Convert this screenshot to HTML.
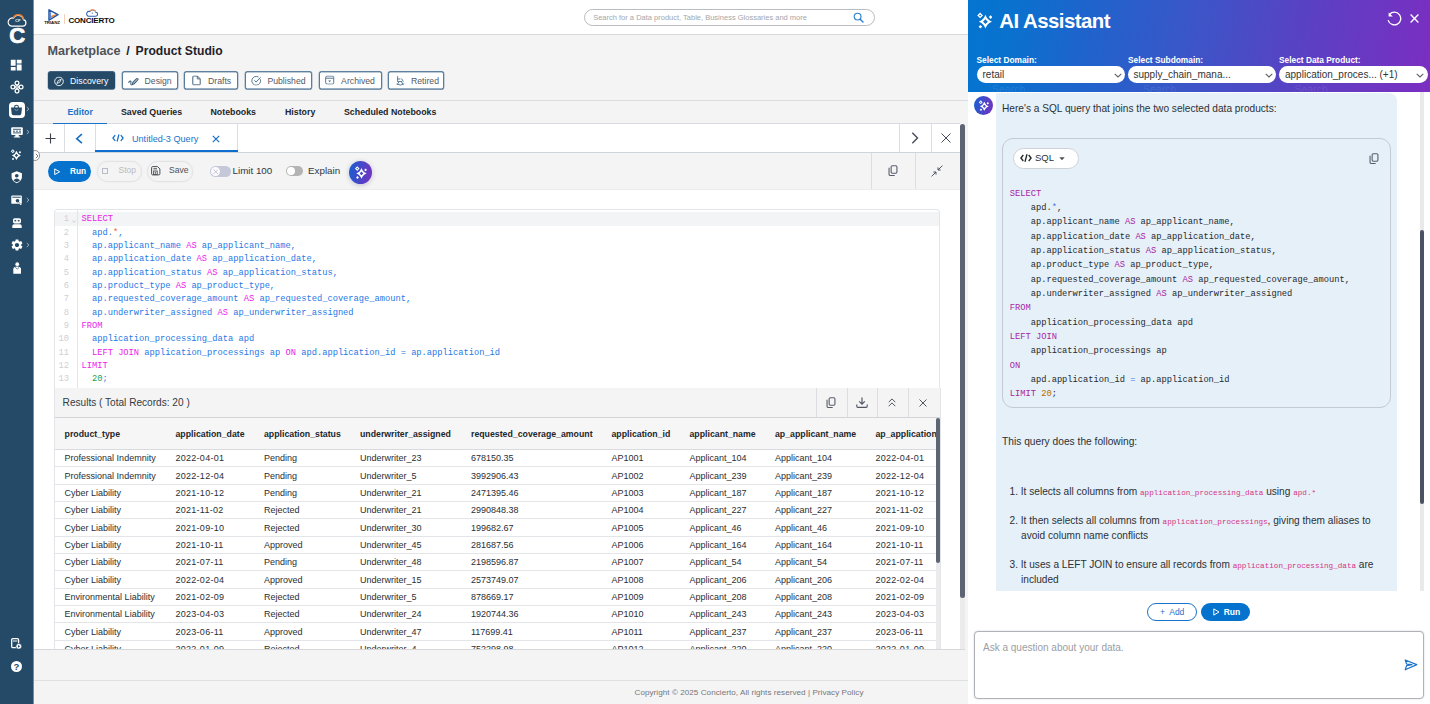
<!DOCTYPE html>
<html lang="en">
<head>
<meta charset="utf-8">
<title>Product Studio</title>
<style>
*{box-sizing:border-box;margin:0;padding:0}
html,body{width:1430px;height:704px;overflow:hidden}
body{position:relative;background:#f4f4f4;font-family:"Liberation Sans",sans-serif;font-size:9px;color:#222}
.abs{position:absolute}
.nw{white-space:nowrap}
/* ---------- sidebar ---------- */
#side{left:0;top:0;width:33px;height:704px;background:#254a67;z-index:5}
#side .ic{position:absolute;left:8px;width:17px;height:17px}
#side .chev{position:absolute;left:26.3px;width:4px;height:6px}
/* ---------- top ---------- */
#top{left:33px;top:0;width:935px;height:35px;background:#fff;border-bottom:1px solid #dadada}
#search{left:584px;top:9px;width:291px;height:17px;border:1px solid #b9bcc0;border-radius:9px;background:#fff}
#search span{position:absolute;left:8.2px;top:3px;font-size:7.5px;line-height:9px;color:#a4a7ab;white-space:nowrap}
#crumb{left:47.5px;top:42.5px;word-spacing:2.3px;font-size:12.5px;font-weight:bold;color:#1d2129;white-space:nowrap;line-height:16px}
#crumb .m{color:#4f5257;font-size:12.65px}
#crumb .p{font-size:12.15px;word-spacing:0}
.pill{position:absolute;top:71px;height:18.4px;transform:translateY(.4px);border:1px solid #587c99;box-shadow:0 0 0 .35px #6d8ba5;border-radius:2.5px;background:#fff;color:#54595f;font-size:8.7px;line-height:16.6px;white-space:nowrap}
.pill.on{background:#254a67;border-color:#254a67;color:#fff}
.pill span{position:absolute;top:.6px}
.pill svg{position:absolute}
#hr1{left:34px;top:100px;width:934px;height:1px;background:#dcdde0}
.tab{position:absolute;top:106.9px;font-size:8.8px;font-weight:bold;color:#22262b;line-height:11px;white-space:nowrap}
#qtabs{left:34px;top:123px;width:926px;height:30px;background:#fff;border-top:1px solid #d9dbe0;border-bottom:1px solid #cfd3da}
#tool{left:34px;top:153px;width:926px;height:37px;background:#f4f4f4;border-bottom:1px solid #ececec}
#edwrap{left:34px;top:190px;width:931px;height:460px;background:#fff;overflow:hidden;border-bottom:1px solid #d5d7db}
.vd{position:absolute;width:1px;background:#dcdde0}
/* editor */
#code{position:absolute;left:20px;top:19px;width:886px;height:190px;border:1px solid #e3e5e9;border-radius:3px;background:#fff;overflow:hidden}
#code .gut{position:absolute;left:0;top:0;width:23px;height:100%;border-right:1px solid #e3e5e9}
#code .hl{position:absolute;left:0;top:2px;width:100%;height:13.5px;background:#f3f4f6}
#code pre{position:absolute;font-family:"Liberation Mono",monospace;font-size:8.72px;line-height:13.33px;top:3.4px}
#code pre.ln{left:0;width:14px;text-align:right;color:#ced1d5}
#code pre.src{left:26.5px;color:#2679e6}
.k{color:#ec22ea}.o{color:#f2682a}.n{color:#1f9d3c}
/* results */
#res{position:absolute;left:20px;top:198px;width:887px;height:270px;background:#fff;border-left:1px solid #e3e5e9;border-right:1px solid #e3e5e9;overflow:hidden}
#resh{position:absolute;left:0;top:0;width:887px;height:30px;background:#f4f4f4;border-bottom:1px solid #d2d4d8}
#resh .t{position:absolute;left:7.6px;top:8.7px;font-size:10.1px;line-height:12px;color:#333a44;white-space:nowrap}
#th{position:absolute;left:0;top:30px;width:881px;height:32px;overflow:hidden;background:#f6f6f6;border-bottom:1px solid #d8dadd}
#th span{position:absolute;top:10.7px;font-size:8.75px;font-weight:bold;line-height:11px;color:#23272d;white-space:nowrap}
.r{position:absolute;left:0;width:881px;height:17.35px;border-bottom:1px solid #e4e5e8}
.r span{position:absolute;top:3.2px;font-size:9px;line-height:10px;color:#2a2e34;white-space:nowrap}
.r .c2,.r .c9{letter-spacing:.27px}
.c1{left:9.6px}.c2{left:120.5px}.c3{left:209px}.c4{left:305px}.c5{left:416px}.c6{left:556.5px}.c7{left:634.5px}.c8{left:720px}.c9{left:820.5px}
/* scrollbars */
.sb{position:absolute;background:#5d6575;border-radius:2.5px}
/* footer */
#hr2{left:34px;top:680px;width:934px;height:1px;background:#dfe0e2}
#foot{left:634.5px;top:686.5px;font-size:8.1px;line-height:11px;color:#74777c;white-space:nowrap;letter-spacing:.05px}
/* ---------- AI panel ---------- */
#ai{left:968px;top:0;width:462px;height:704px;background:#fff}
#aih{left:0;top:0;width:462px;height:92px;background:linear-gradient(98deg,#0375d0 0%,#0a71cf 10%,#1f63cc 26%,#3957c8 46%,#5a41c4 72%,#7b2ec1 100%);overflow:hidden}
#aih h1{position:absolute;left:31.2px;top:8.75px;font-size:20.4px;letter-spacing:-.52px;line-height:24px;font-weight:bold;color:#fff;white-space:nowrap}
.lab{position:absolute;top:54.6px;font-size:8.35px;font-weight:bold;line-height:11px;color:#fff;white-space:nowrap}
.sel{position:absolute;top:66px;width:148.5px;height:17px;border-radius:9px;background:#fff;font-size:10px;line-height:16px;color:#333;white-space:nowrap}
.sel span{position:absolute;left:6px;top:.6px}
.sel svg{position:absolute;right:3.2px;top:6.7px}
.ghost{position:absolute;top:83px;font-size:10.5px;line-height:12px;color:rgba(255,255,255,.11);white-space:nowrap}
#bub{left:27.5px;top:92.5px;width:401.5px;height:498px;background:#e6f0f9;border-radius:0 8px 0 0;font-size:10.15px;color:#2c3036}
#bub p{position:absolute;left:7px;white-space:nowrap;line-height:14.1px}
#cb{position:absolute;left:6.5px;top:45.5px;width:389px;height:269.6px;border:1px solid #c3cad3;border-radius:11px}
#cb pre{position:absolute;left:6.8px;top:47.7px;font-family:"Liberation Mono",monospace;font-size:8.72px;line-height:14.33px;color:#25292e}
#cb .k{color:#a626a4}#cb .o{color:#4078f2}#cb .n{color:#b76b01}
#sqlp{position:absolute;left:9.5px;top:8.5px;width:66.5px;height:21px;border:1px solid #cfd3d8;border-radius:11px;background:#fff;font-size:9.5px;line-height:19px;color:#2c3036}
code{font-family:"Liberation Mono",monospace;font-size:7.62px;color:#d63384}
.btn{position:absolute;top:603px;height:18px;border-radius:9px;font-size:8.5px;line-height:16px;white-space:nowrap}
#inp{left:6px;top:631px;width:450px;height:67.5px;border:1px solid #aeb1b6;border-radius:4px;background:#fff;box-shadow:0 0 2px rgba(0,0,0,.18)}
#inp span{position:absolute;left:8px;top:9.5px;font-size:10px;line-height:12px;color:#9b9ea3;white-space:nowrap}
</style>
</head>
<body>
<!-- SIDEBAR -->
<svg width="0" height="0" style="position:absolute"><defs>
<symbol id="spark" viewBox="-8 -8 16 16"><path fill-rule="evenodd" d="M1.2 -5.5Q2.9 -0.5 7.6 1.2Q2.9 2.9 1.2 7.8Q-0.5 2.9 -5.2 1.2Q-0.5 -0.5 1.2 -5.5ZM1.2 -1.1L3.5 1.2L1.2 3.5L-1.1 1.2Z"/><path fill-rule="evenodd" d="M-4 -7.6L-1.2 -4.8L-4 -2L-6.8 -4.8ZM-4 -5.8L-3 -4.8L-4 -3.8L-5 -4.8Z"/><path d="M6.3 -5L8 -3.2L6.3 -1.4L4.5 -3.2ZM-3.7 4.4L-1.9 6.2L-3.7 8L-5.5 6.2Z"/></symbol>
<symbol id="copy" viewBox="0 0 12 13"><rect x="3.6" y="0.7" width="6.6" height="8.6" rx="1.3" fill="none" stroke="currentColor" stroke-width="1.25"/><path d="M1.2 3.4V10.4Q1.2 11.9 2.7 11.9H7.2" fill="none" stroke="currentColor" stroke-width="1.25" stroke-linecap="round"/></symbol>
</defs></svg>
<div id="side" class="abs">
<svg class="abs" style="left:6px;top:13px" width="22" height="15" viewBox="0 0 22 15"><path d="M5.2 13.2h11.6a3.3 3.3 0 0 0 .6-6.5A5.2 5.2 0 0 0 7.6 5.1 4.1 4.1 0 0 0 5.2 13.2z" fill="none" stroke="#fff" stroke-width="1.2"/><path d="M7.2 5.2A5.4 5.4 0 0 1 17.6 6.6" fill="none" stroke="#e8792f" stroke-width="1.5"/><text x="9.3" y="9.4" font-size="3.6" font-weight="bold" fill="#fff" font-family="Liberation Sans, sans-serif">CP</text></svg>
<div class="abs" style="left:9.2px;top:24.6px;font-size:22px;line-height:22px;font-weight:bold;color:#fff;-webkit-text-stroke:.7px #fff">C</div>
<!-- dashboard -->
<svg class="abs" style="left:9.2px;top:57.5px" width="14.4" height="14.4" viewBox="0 0 24 24" fill="#fff"><path d="M3 13h8V3H3v10zm0 8h8v-6H3v6zm10 0h8V11h-8v10zm0-18v6h8V3h-8z"/></svg>
<!-- hub -->
<svg class="abs" style="left:9.5px;top:80px" width="14" height="14" viewBox="0 0 14 14" fill="none" stroke="#fff" stroke-width="1.25"><circle cx="7" cy="2.9" r="1.9"/><circle cx="7" cy="11.1" r="1.9"/><circle cx="2.9" cy="7" r="1.9"/><circle cx="11.1" cy="7" r="1.9"/><circle cx="7" cy="7" r="1.3"/></svg>
<!-- active bag -->
<div class="abs" style="left:9px;top:102px;width:16px;height:16px;border-radius:4px;background:#fff"></div>
<svg class="abs" style="left:10.4px;top:103.6px" width="13" height="13" viewBox="0 0 13 13"><path d="M1 3.4H12L11.3 9.8Q11.1 11.2 9.7 11.2H3.3Q1.9 11.2 1.7 9.8Z" fill="#254a67"/><path d="M4.6 4.4V3.2A1.9 1.9 0 0 1 8.4 3.2V4.4" fill="none" stroke="#254a67" stroke-width="1.1"/><path d="M4.9 4.9A1.6 1.6 0 0 0 8.1 4.9" fill="none" stroke="#fff" stroke-width="0.6" opacity=".6"/></svg>
<svg class="chev" style="top:106px" viewBox="0 0 5 7"><path d="M1 1L3.6 3.5L1 6" fill="none" stroke="#b4c4d1" stroke-width="1.1"/></svg>
<!-- monitor -->
<svg class="abs" style="left:10.5px;top:127px" width="12" height="11" viewBox="0 0 12 11"><rect x="0.2" y="0.3" width="11.6" height="7.6" rx="1" fill="#fff"/><path d="M4.3 7.9H7.7V9.4H9.2V10.4H2.8V9.4H4.3Z" fill="#fff"/><path d="M2 2.3H10M2 4.2H4M5 4.2H7M8 4.2H10M2 5.9H10" stroke="#254a67" stroke-width="0.9"/></svg>
<svg class="chev" style="top:128.5px" viewBox="0 0 5 7"><path d="M1 1L3.6 3.5L1 6" fill="none" stroke="#b4c4d1" stroke-width="1.1"/></svg>
<!-- sparkle -->
<svg class="abs" style="left:10.4px;top:149.2px" width="11.2" height="11.2" fill="#fff"><use href="#spark"/></svg>
<!-- shield -->
<svg class="abs" style="left:11px;top:171px" width="11.5" height="12.5" viewBox="0 0 12 13"><path d="M6 0.3L11.4 2.2V6.3Q11.4 10.4 6 12.7Q0.6 10.4 0.6 6.3V2.2Z" fill="#fff"/><circle cx="6" cy="4.9" r="1.9" fill="#254a67"/><path d="M2.6 9.6Q6 6.2 9.4 9.6Q8 11 6 11.6Q4 11 2.6 9.6Z" fill="#254a67"/></svg>
<!-- window search -->
<svg class="abs" style="left:11px;top:194.5px" width="11.5" height="11" viewBox="0 0 12 11"><rect x="0.3" y="0.3" width="11" height="8.6" rx="0.9" fill="#fff"/><path d="M1.4 2.1H10.2" stroke="#254a67" stroke-width="1"/><circle cx="6.8" cy="5.8" r="1.9" fill="#254a67"/><path d="M8 7.2L10.6 10" stroke="#fff" stroke-width="1.3"/><path d="M8.3 7.4L9.6 8.8" stroke="#254a67" stroke-width="0.9"/></svg>
<svg class="chev" style="top:196.5px" viewBox="0 0 5 7"><path d="M1 1L3.6 3.5L1 6" fill="none" stroke="#b4c4d1" stroke-width="1.1"/></svg>
<!-- robot -->
<svg class="abs" style="left:11.5px;top:217.5px" width="10" height="10.5" viewBox="0 0 10 10.5"><rect x="1" y="0.2" width="8" height="5.2" rx="1.6" fill="#fff"/><rect x="2.5" y="1.9" width="1.7" height="1.5" fill="#254a67"/><rect x="5.8" y="1.9" width="1.7" height="1.5" fill="#254a67"/><path d="M0.3 10.3V8.1Q0.3 6.3 2.2 6.3H7.8Q9.7 6.3 9.7 8.1V10.3Z" fill="#fff"/></svg>
<!-- gear -->
<svg class="abs" style="left:9.6px;top:238.2px" width="14" height="14" viewBox="0 0 24 24" fill="#fff"><path d="M19.14 12.94c.04-.3.06-.61.06-.94 0-.32-.02-.64-.07-.94l2.03-1.58a.49.49 0 0 0 .12-.61l-1.92-3.32a.488.488 0 0 0-.59-.22l-2.39.96c-.5-.38-1.03-.7-1.62-.94l-.36-2.54a.484.484 0 0 0-.48-.41h-3.84c-.24 0-.43.17-.47.41l-.36 2.54c-.59.24-1.13.57-1.62.94l-2.39-.96c-.22-.08-.47 0-.59.22L2.74 8.87c-.12.21-.08.47.12.61l2.03 1.58c-.05.3-.09.63-.09.94s.02.64.07.94l-2.03 1.58a.49.49 0 0 0-.12.61l1.92 3.32c.12.22.37.29.59.22l2.39-.96c.5.38 1.03.7 1.62.94l.36 2.54c.05.24.24.41.48.41h3.84c.24 0 .44-.17.47-.41l.36-2.54c.59-.24 1.13-.56 1.62-.94l2.39.96c.22.08.47 0 .59-.22l1.92-3.32c.12-.22.07-.47-.12-.61l-2.01-1.58zM12 15.6c-1.98 0-3.6-1.62-3.6-3.6s1.620-3.6 3.600-3.600 3.600 1.620 3.600 3.600-1.620 3.600-3.600 3.600z"/></svg>
<svg class="chev" style="top:241.5px" viewBox="0 0 5 7"><path d="M1 1L3.6 3.5L1 6" fill="none" stroke="#b4c4d1" stroke-width="1.1"/></svg>
<!-- person lock -->
<svg class="abs" style="left:12.5px;top:261.5px" width="8.5" height="12" viewBox="0 0 8.5 12"><circle cx="4.25" cy="2.2" r="1.9" fill="#fff"/><path d="M0.3 11.7V7.2Q0.3 4.6 4.25 4.6Q8.2 4.6 8.2 7.2V11.7Z" fill="#fff"/><path d="M2.2 5.2L4.25 7L6.3 5.2" fill="none" stroke="#254a67" stroke-width="0.7"/></svg>
<!-- doc play -->
<svg class="abs" style="left:10.8px;top:637.8px" width="11" height="11.5" viewBox="0 0 11 11.5"><rect x="0.7" y="0.7" width="6.9" height="9" rx="1.2" fill="none" stroke="#fff" stroke-width="1.3"/><path d="M2 3H6.4" stroke="#fff" stroke-width="1"/><circle cx="7.8" cy="8.3" r="2.9" fill="#fff" stroke="#254a67" stroke-width="0.7"/><path d="M7 6.9L9.3 8.3L7 9.7Z" fill="#254a67"/></svg>
<!-- help -->
<div class="abs" style="left:10.8px;top:660.5px;width:11.4px;height:11.4px;border-radius:6px;background:#fff;color:#254a67;font-size:9.5px;font-weight:bold;line-height:11.6px;text-align:center">?</div>
</div>
<div class="abs" style="left:33px;top:0;width:1px;height:704px;background:#254a67;opacity:.6;z-index:6"></div>
<!-- TOP BAR -->
<div id="top" class="abs"></div>
<svg class="abs" style="left:47.5px;top:8.5px" width="11" height="12" viewBox="0 0 11 12"><path d="M1 0.8L10 5.6L1 11.2Z" fill="none" stroke="#2456a6" stroke-width="1.5" stroke-linejoin="round"/><path d="M2.6 3.2V9" stroke="#4b7cc4" stroke-width="1"/><path d="M3.6 8.6L8.2 5.4L3.6 7Z" fill="#ee7d33" stroke="#ee7d33" stroke-width="0.8"/></svg>
<div class="abs nw" style="left:44.2px;top:19.6px;font-size:4.4px;line-height:5px;font-weight:bold;color:#111;letter-spacing:-.05px">TRIANZ</div>
<div class="abs" style="left:64px;top:14px;width:1px;height:10px;background:#f6cfbc"></div>
<svg class="abs" style="left:84.8px;top:8px" width="13.6" height="9.2" viewBox="0 0 13 9"><path d="M3.1 8H10.2A1.9 1.9 0 0 0 10.4 4.2A3.2 3.2 0 0 0 4.6 3.5A2.3 2.3 0 0 0 3.1 8Z" fill="none" stroke="#2f62ad" stroke-width="1.05"/><path d="M4.4 3.3A3.4 3.4 0 0 1 10.6 4" fill="none" stroke="#f09a66" stroke-width="1"/><circle cx="7" cy="5" r="0.7" fill="#3d6fb6"/></svg>
<div class="abs nw" style="left:68.5px;top:16.1px;font-size:8px;letter-spacing:-.2px;line-height:9px;font-weight:bold;color:#0c0c0c">CONCIERTO</div>
<div id="search" class="abs"><span>Search for a Data product, Table, Business Glossaries and more</span>
<svg class="abs" style="left:267.5px;top:2px" width="11" height="11" viewBox="0 0 11 11"><circle cx="4.6" cy="4.6" r="3.4" fill="none" stroke="#2a7fd0" stroke-width="1.15"/><path d="M7.2 7.2L10 10" stroke="#2a7fd0" stroke-width="1.4" stroke-linecap="round"/></svg></div>
<div id="crumb" class="abs"><span class="m">Marketplace</span> / <span class="p">Product Studio</span></div>
<!-- pills -->
<div class="pill on" style="left:47.5px;width:67.5px"><svg width="10" height="10" viewBox="0 0 10 10" style="left:5.8px;top:3.8px"><circle cx="5" cy="5" r="4.3" fill="none" stroke="#fff" stroke-width="0.9"/><path d="M7.2 2.8L5.8 5.8L2.8 7.2L4.2 4.2Z" fill="none" stroke="#fff" stroke-width="0.8"/></svg><span style="left:21.6px">Discovery</span></div>
<div class="pill" style="left:122px;width:56px"><svg width="11" height="9" viewBox="0 0 11 9" style="left:4.8px;top:4.6px"><path d="M4.2 7.2L4.9 5L8.6 1.3Q9.2 0.8 9.9 1.4Q10.4 2 9.8 2.6L6.2 6.3Z" fill="#4a6d8c" fill-opacity=".35" stroke="#3f627f" stroke-width="1.05"/><path d="M0.6 5.6Q1 3.6 2.3 3.6Q3.5 3.8 2.8 5.4Q2.4 7 3.6 7.6" fill="none" stroke="#3f627f" stroke-width="1.05"/></svg><span style="left:21.6px">Design</span></div>
<div class="pill" style="left:183.5px;width:54.5px"><svg width="9" height="10" viewBox="0 0 9 10" style="left:7.6px;top:3.4px"><path d="M0.8 1.4Q0.8 0.6 1.6 0.6H5.4L8.2 3.4V8.8Q8.2 9.5 7.4 9.5H1.6Q0.8 9.5 0.8 8.8Z" fill="none" stroke="#3f5f7d" stroke-width="1"/><path d="M5.3 0.8V3.5H8" fill="none" stroke="#3f5f7d" stroke-width="0.9"/></svg><span style="left:23.5px">Drafts</span></div>
<div class="pill" style="left:245px;width:67px"><svg width="10.5" height="10.5" viewBox="0 0 10.5 10.5" style="left:5.2px;top:2.7px"><path d="M9.3 3.8A4.4 4.4 0 1 1 7.6 1.7" fill="none" stroke="#4a6d8c" stroke-width="0.9"/><path d="M3.4 4.9L5.1 6.7L9.6 1.9" fill="none" stroke="#4a6d8c" stroke-width="0.95"/></svg><span style="left:21.4px">Published</span></div>
<div class="pill" style="left:318.5px;width:63px"><svg width="9.4" height="9.4" viewBox="0 0 10 10" style="left:5.9px;top:3.1px"><rect x="0.7" y="0.7" width="8.6" height="8.6" rx="1.6" fill="none" stroke="#4a6d8c" stroke-width="1"/><path d="M0.9 3H9.1" stroke="#4a6d8c" stroke-width="1"/><path d="M3.4 5.4H6.6L5 7.4Z" fill="#4a6d8c"/></svg><span style="left:21.6px">Archived</span></div>
<div class="pill" style="left:388px;width:56px"><svg width="9" height="11" viewBox="0 0 9 11" style="left:6.8px;top:3px"><path d="M1.6 0.8V6.2H6.2M1.6 3.6H4.4M3 6.2L1.4 9M5.4 6.2L7 9M0.6 8.6Q4.4 10.8 8.2 8.4M5.6 3.2L7.4 6.2" fill="none" stroke="#4a6d8c" stroke-width="0.9"/></svg><span style="left:22px">Retired</span></div>
<div id="hr1" class="abs"></div>
<div class="tab" style="left:67.5px;color:#1a73c8">Editor</div>
<div class="tab" style="left:121px">Saved Queries</div>
<div class="tab" style="left:210.5px">Notebooks</div>
<div class="tab" style="left:285px">History</div>
<div class="tab" style="left:344px">Scheduled Notebooks</div>
<div class="abs" style="left:53px;top:122.5px;width:54px;height:1.5px;background:#1a73c8;z-index:2"></div>
<!-- query tabs -->
<div id="qtabs" class="abs">
 <div class="vd" style="left:30px;top:0;height:28px"></div>
 <div class="vd" style="left:61px;top:0;height:28px"></div>
 <div class="vd" style="left:203px;top:0;height:28px"></div>
 <div class="vd" style="left:865px;top:0;height:28px"></div>
 <div class="vd" style="left:897px;top:0;height:28px"></div>
 <svg class="abs" style="left:10.5px;top:9px" width="11" height="11" viewBox="0 0 11 11"><path d="M5.5 0.5V10.5M0.5 5.5H10.5" stroke="#3a3f49" stroke-width="1.1"/></svg>
 <svg class="abs" style="left:41px;top:8.6px" width="8.6" height="11.4" viewBox="0 0 8 10"><path d="M6.4 0.8L1.6 5L6.4 9.2" fill="none" stroke="#1570c8" stroke-width="1.5"/></svg>
 <svg class="abs" style="left:77.5px;top:10px" width="12" height="8" viewBox="0 0 12 8"><path d="M3.2 1.2L0.9 4L3.2 6.8M8.8 1.2L11.1 4L8.8 6.8M6.9 0.5L5.1 7.5" fill="none" stroke="#1570c8" stroke-width="1.25"/></svg>
 <div class="abs" style="left:61px;top:26px;width:142.5px;height:2.2px;background:#0d6ecf"></div>
 <div class="abs nw" style="left:98px;top:9.7px;font-size:9.1px;line-height:11px;color:#1a73c8">Untitled-3 Query</div>
 <svg class="abs" style="left:178px;top:10.5px" width="8" height="8" viewBox="0 0 8 8"><path d="M0.8 0.8L7.2 7.2M7.2 0.8L0.8 7.2" stroke="#1570c8" stroke-width="1.2"/></svg>
 <svg class="abs" style="left:877px;top:7.8px" width="8" height="12" viewBox="0 0 8 12"><path d="M1.3 0.8L6.5 6L1.3 11.2" fill="none" stroke="#454b59" stroke-width="1.4"/></svg>
 <svg class="abs" style="left:906.5px;top:9px" width="10" height="10" viewBox="0 0 10 10"><path d="M0.5 0.5L9.5 9.5M9.5 0.5L0.5 9.5" stroke="#454b59" stroke-width="1"/></svg>
</div>
<!-- toolbar -->
<div id="tool" class="abs">
 <div class="vd" style="left:836.5px;top:0;height:36px"></div>
 <div class="vd" style="left:881px;top:0;height:36px"></div>
 <svg class="abs" style="left:853.5px;top:12.3px;color:#555c6b" width="10.5" height="11.5"><use href="#copy"/></svg>
 <svg class="abs" style="left:897px;top:12px" width="12" height="12" viewBox="0 0 12 12"><path d="M0.6 11.4L5 7M5 7H2.4M5 7V9.6M11.4 0.6L7 5M7 5H9.6M7 5V2.4" fill="none" stroke="#4f5564" stroke-width="1"/></svg>
 <div class="abs" style="left:13.7px;top:7.7px;width:43.3px;height:21.2px;border-radius:11px;background:#0573cd"></div>
 <svg class="abs" style="left:20px;top:14.5px" width="6.5" height="7.5" viewBox="0 0 6.5 7.5"><path d="M0.7 0.9L5.7 3.75L0.7 6.6Z" fill="none" stroke="#fff" stroke-width="1" stroke-linejoin="round"/></svg>
 <div class="abs nw" style="left:36px;top:12.8px;font-size:8.3px;line-height:10px;font-weight:bold;color:#fff">Run</div>
 <div class="abs" style="left:62.5px;top:7.5px;width:45.5px;height:21px;border-radius:11px;border:1.4px solid #e3e3e6;box-shadow:0 0 1.5px #e0e0e3"></div>
 <div class="abs" style="left:68.3px;top:15.2px;width:5.6px;height:5.6px;border:1px solid #b9bbc9"></div>
 <div class="abs nw" style="left:84.5px;top:12.3px;font-size:8.5px;line-height:10px;color:#b8bac6">Stop</div>
 <div class="abs" style="left:113.3px;top:7.5px;width:46.2px;height:21px;border-radius:11px;border:1.4px solid #e3e3e6;box-shadow:0 0 1.5px #e0e0e3"></div>
 <svg class="abs" style="left:117px;top:13px" width="9.5" height="9.5" viewBox="0 0 9.5 9.5"><path d="M1.7 0.6H6.6L8.9 2.9V7.8Q8.9 8.9 7.8 8.9H1.7Q0.6 8.9 0.6 7.8V1.7Q0.6 0.6 1.7 0.6Z" fill="none" stroke="#4a4e55" stroke-width="1"/><path d="M2.4 2.8H6" stroke="#4a4e55" stroke-width="1.1"/><rect x="2.6" y="5" width="3.6" height="3.6" fill="none" stroke="#4a4e55" stroke-width="0.9"/><rect x="3.8" y="6.2" width="1.2" height="1.4" fill="#4a4e55"/></svg>
 <div class="abs nw" style="left:135px;top:11.8px;font-size:8.6px;line-height:10px;color:#4f5359">Save</div>
 <div class="abs" style="left:176.2px;top:13px;width:20.5px;height:10.5px;border-radius:6px;background:#c4c8d8"></div>
 <div class="abs" style="left:176.8px;top:13.5px;width:9.5px;height:9.5px;border-radius:5px;background:#fbfbfd"></div>
 <svg class="abs" style="left:178.8px;top:15.5px" width="5.5" height="5.5" viewBox="0 0 5.5 5.5"><path d="M0.5 0.5L5 5M5 0.5L0.5 5" stroke="#b5b9c9" stroke-width="0.8"/></svg>
 <div class="abs nw" style="left:198.5px;top:12px;font-size:9.8px;line-height:12px;color:#33373d">Limit 100</div>
 <div class="abs" style="left:252px;top:13.2px;width:17.3px;height:9.8px;border-radius:5px;background:#b4b4b4"></div>
 <div class="abs" style="left:253px;top:14.2px;width:7.8px;height:7.8px;border-radius:4px;background:#fff"></div>
 <div class="abs nw" style="left:274px;top:12px;font-size:9.8px;line-height:12px;color:#33373d">Explain</div>
 <div class="abs" style="left:315px;top:7.5px;width:23px;height:23px;border-radius:12px;background:linear-gradient(100deg,#1560d2,#7a2fbe);box-shadow:0 1px 5px rgba(60,60,120,.28)"></div>
 <svg class="abs" style="left:320px;top:12.6px" width="13" height="13" fill="#fff"><use href="#spark"/></svg>
</div>
<div class="abs" style="left:29.5px;top:150px;width:10.6px;height:10.6px;border-radius:6px;border:1px solid #8e939b;background:#fff;z-index:4"></div>
<svg class="abs" style="left:34.6px;top:152.6px;z-index:4" width="4" height="6" viewBox="0 0 4 6"><path d="M0.8 0.8L3 3L0.8 5.2" fill="none" stroke="#6b7079" stroke-width="0.9"/></svg>
<!-- editor wrap -->
<div id="edwrap" class="abs">
 <div id="code">
  <div class="hl"></div><div class="gut"></div>
<svg class="abs" style="left:16.5px;top:9.5px" width="4" height="3" viewBox="0 0 4 3"><path d="M0.4 0.5L2 2.3L3.6 0.5" fill="none" stroke="#b9bdc4" stroke-width="0.7"/></svg>
<pre class="ln">1
2
3
4
5
6
7
8
9
10
11
12
13</pre>
<pre class="src"><span class="k">SELECT</span>
  apd.<span class="o">*</span>,
  ap.applicant_name <span class="k">AS</span> ap_applicant_name,
  ap.application_date <span class="k">AS</span> ap_application_date,
  ap.application_status <span class="k">AS</span> ap_application_status,
  ap.product_type <span class="k">AS</span> ap_product_type,
  ap.requested_coverage_amount <span class="k">AS</span> ap_requested_coverage_amount,
  ap.underwriter_assigned <span class="k">AS</span> ap_underwriter_assigned
<span class="k">FROM</span>
  application_processing_data apd
  <span class="k">LEFT JOIN</span> application_processings ap <span class="k">ON</span> apd.application_id = ap.application_id
<span class="k">LIMIT</span>
  <span class="n">20</span>;</pre>
 </div>
 <div id="res">
  <div id="resh"><div class="t">Results ( Total Records: 20 )</div>
   <div class="vd" style="left:761px;top:0;height:29px"></div><div class="vd" style="left:791.5px;top:0;height:29px"></div><div class="vd" style="left:822px;top:0;height:29px"></div><div class="vd" style="left:852.5px;top:0;height:29px"></div>
   <svg class="abs" style="left:770.5px;top:8.5px;color:#555c6b" width="10.5" height="11.5"><use href="#copy"/></svg>
   <svg class="abs" style="left:801px;top:9px" width="12" height="11" viewBox="0 0 12 11"><path d="M6 0.5V7M3.2 4.4L6 7.2L8.8 4.4M0.8 7.6V9.2Q0.8 10.3 1.9 10.3H10.1Q11.2 10.3 11.2 9.2V7.6" fill="none" stroke="#4f5564" stroke-width="1.15"/></svg>
   <svg class="abs" style="left:833px;top:10px" width="8" height="9" viewBox="0 0 8 9"><path d="M0.7 4.2L4 0.9L7.3 4.2M0.7 8.2L4 4.9L7.3 8.2" fill="none" stroke="#4f5564" stroke-width="1"/></svg>
   <svg class="abs" style="left:863.5px;top:10.5px" width="8" height="8" viewBox="0 0 8 8"><path d="M0.5 0.5L7.5 7.5M7.5 0.5L0.5 7.5" stroke="#4f5564" stroke-width="1"/></svg>
  </div>
  <div id="th"><span class="c1">product_type</span><span class="c2">application_date</span><span class="c3">application_status</span><span class="c4">underwriter_assigned</span><span class="c5">requested_coverage_amount</span><span class="c6">application_id</span><span class="c7">applicant_name</span><span class="c8">ap_applicant_name</span><span class="c9">ap_application_date</span></div>
  <div class="abs" style="left:881px;top:30px;width:5px;height:240px;background:#ebebec"></div>
  <div class="sb" style="left:881px;top:29.5px;width:4.2px;height:145px"></div>
  <div id="rows">
<div class="r" style="top:62.00px"><span class="c1">Professional Indemnity</span><span class="c2">2022-04-01</span><span class="c3">Pending</span><span class="c4">Underwriter_23</span><span class="c5">678150.35</span><span class="c6">AP1001</span><span class="c7">Applicant_104</span><span class="c8">Applicant_104</span><span class="c9">2022-04-01</span></div>
<div class="r" style="top:79.35px"><span class="c1">Professional Indemnity</span><span class="c2">2022-12-04</span><span class="c3">Pending</span><span class="c4">Underwriter_5</span><span class="c5">3992906.43</span><span class="c6">AP1002</span><span class="c7">Applicant_239</span><span class="c8">Applicant_239</span><span class="c9">2022-12-04</span></div>
<div class="r" style="top:96.70px"><span class="c1">Cyber Liability</span><span class="c2">2021-10-12</span><span class="c3">Pending</span><span class="c4">Underwriter_21</span><span class="c5">2471395.46</span><span class="c6">AP1003</span><span class="c7">Applicant_187</span><span class="c8">Applicant_187</span><span class="c9">2021-10-12</span></div>
<div class="r" style="top:114.05px"><span class="c1">Cyber Liability</span><span class="c2">2021-11-02</span><span class="c3">Rejected</span><span class="c4">Underwriter_21</span><span class="c5">2990848.38</span><span class="c6">AP1004</span><span class="c7">Applicant_227</span><span class="c8">Applicant_227</span><span class="c9">2021-11-02</span></div>
<div class="r" style="top:131.40px"><span class="c1">Cyber Liability</span><span class="c2">2021-09-10</span><span class="c3">Rejected</span><span class="c4">Underwriter_30</span><span class="c5">199682.67</span><span class="c6">AP1005</span><span class="c7">Applicant_46</span><span class="c8">Applicant_46</span><span class="c9">2021-09-10</span></div>
<div class="r" style="top:148.75px"><span class="c1">Cyber Liability</span><span class="c2">2021-10-11</span><span class="c3">Approved</span><span class="c4">Underwriter_45</span><span class="c5">281687.56</span><span class="c6">AP1006</span><span class="c7">Applicant_164</span><span class="c8">Applicant_164</span><span class="c9">2021-10-11</span></div>
<div class="r" style="top:166.10px"><span class="c1">Cyber Liability</span><span class="c2">2021-07-11</span><span class="c3">Pending</span><span class="c4">Underwriter_48</span><span class="c5">2198596.87</span><span class="c6">AP1007</span><span class="c7">Applicant_54</span><span class="c8">Applicant_54</span><span class="c9">2021-07-11</span></div>
<div class="r" style="top:183.45px"><span class="c1">Cyber Liability</span><span class="c2">2022-02-04</span><span class="c3">Approved</span><span class="c4">Underwriter_15</span><span class="c5">2573749.07</span><span class="c6">AP1008</span><span class="c7">Applicant_206</span><span class="c8">Applicant_206</span><span class="c9">2022-02-04</span></div>
<div class="r" style="top:200.80px"><span class="c1">Environmental Liability</span><span class="c2">2021-02-09</span><span class="c3">Rejected</span><span class="c4">Underwriter_5</span><span class="c5">878669.17</span><span class="c6">AP1009</span><span class="c7">Applicant_208</span><span class="c8">Applicant_208</span><span class="c9">2021-02-09</span></div>
<div class="r" style="top:218.15px"><span class="c1">Environmental Liability</span><span class="c2">2023-04-03</span><span class="c3">Rejected</span><span class="c4">Underwriter_24</span><span class="c5">1920744.36</span><span class="c6">AP1010</span><span class="c7">Applicant_243</span><span class="c8">Applicant_243</span><span class="c9">2023-04-03</span></div>
<div class="r" style="top:235.50px"><span class="c1">Cyber Liability</span><span class="c2">2023-06-11</span><span class="c3">Approved</span><span class="c4">Underwriter_47</span><span class="c5">117699.41</span><span class="c6">AP1011</span><span class="c7">Applicant_237</span><span class="c8">Applicant_237</span><span class="c9">2023-06-11</span></div>
<div class="r" style="top:252.85px"><span class="c1">Cyber Liability</span><span class="c2">2022-01-09</span><span class="c3">Rejected</span><span class="c4">Underwriter_4</span><span class="c5">752298.98</span><span class="c6">AP1012</span><span class="c7">Applicant_220</span><span class="c8">Applicant_220</span><span class="c9">2022-01-09</span></div>
</div>
 </div>
</div>
<div class="abs" style="left:960px;top:190px;width:4.6px;height:459px;background:#ebebec"></div>
<div class="sb abs" style="left:960px;top:124px;width:4.6px;height:474px"></div>
<div id="hr2" class="abs"></div>
<div id="foot" class="abs">Copyright © 2025 Concierto, All rights reserved | Privacy Policy</div>
<!-- AI PANEL -->
<div id="ai" class="abs">
 <div id="aih" class="abs">
  <svg class="abs" style="left:8.1px;top:12px" width="16.4" height="16.8" fill="#fff"><use href="#spark"/></svg>
  <h1>AI Assistant</h1>
  <svg class="abs" style="left:419px;top:11px" width="15" height="15" viewBox="0 0 15 15"><path d="M2.6 3.2A6.4 6.4 0 1 1 1.3 9.6" fill="none" stroke="#fff" stroke-width="1.3" stroke-linecap="round"/><path d="M1.6 1.4V5.6H5.8Z" fill="#fff"/></svg>
  <svg class="abs" style="left:441.5px;top:13.8px" width="9" height="9" viewBox="0 0 9 9"><path d="M0.6 0.6L8.4 8.4M8.4 0.6L0.6 8.4" stroke="#fff" stroke-width="1.35"/></svg>
  <div class="lab" style="left:8.5px">Select Domain:</div>
  <div class="lab" style="left:160px">Select Subdomain:</div>
  <div class="lab" style="left:311px">Select Data Product:</div>
  <div class="sel" style="left:8.5px"><span>retail</span><svg width="8" height="5" viewBox="0 0 8 5"><path d="M0.7 0.8L4 4L7.3 0.8" fill="none" stroke="#5a5e65" stroke-width="1.05"/></svg></div>
  <div class="sel" style="left:159.5px"><span>supply_chain_mana...</span><svg width="8" height="5" viewBox="0 0 8 5"><path d="M0.7 0.8L4 4L7.3 0.8" fill="none" stroke="#5a5e65" stroke-width="1.05"/></svg></div>
  <div class="sel" style="left:311px"><span>application_proces... (+1)</span><svg width="8" height="5" viewBox="0 0 8 5"><path d="M0.7 0.8L4 4L7.3 0.8" fill="none" stroke="#5a5e65" stroke-width="1.05"/></svg></div>
  <div class="ghost" style="left:24px">Search</div><div class="ghost" style="left:175px">Search</div><div class="ghost" style="left:326.5px">Search</div>
 </div>
 <div class="abs" style="left:452px;top:92px;width:4px;height:499px;background:#e9e9ea"></div>
 <div class="sb abs" style="left:452px;top:230px;width:4px;height:274px;background:#4c5262"></div>
 <div class="abs" style="left:5.5px;top:96px;width:19px;height:19px;border-radius:10px;background:linear-gradient(100deg,#1560d2,#7a2fbe)"></div>
 <svg class="abs" style="left:9.6px;top:99.9px" width="11" height="11" fill="#fff"><use href="#spark"/></svg>
 <div id="bub" class="abs">
  <p style="top:9.6px;left:6.5px">Here's a SQL query that joins the two selected data products:</p>
  <div id="cb">
   <div id="sqlp"><svg class="abs" style="left:6.5px;top:5.5px" width="12" height="8" viewBox="0 0 12 8"><path d="M3.3 1L0.9 4L3.3 7M8.7 1L11.1 4L8.7 7M7 0.3L5 7.7" fill="none" stroke="#24272c" stroke-width="1.35"/></svg><span class="abs" style="left:21.5px;top:-.6px">SQL</span><svg class="abs" style="left:45px;top:8.3px" width="6" height="3.5" viewBox="0 0 6 3.5"><path d="M0.3 0.3H5.7L3 3.2Z" fill="#4a4e55"/></svg></div>
   <svg class="abs" style="left:365.6px;top:13.6px;color:#555c6b" width="10.5" height="11.5"><use href="#copy"/></svg>
<pre><span class="k">SELECT</span>
    apd.<span class="o">*</span>,
    ap.applicant_name <span class="k">AS</span> ap_applicant_name,
    ap.application_date <span class="k">AS</span> ap_application_date,
    ap.application_status <span class="k">AS</span> ap_application_status,
    ap.product_type <span class="k">AS</span> ap_product_type,
    ap.requested_coverage_amount <span class="k">AS</span> ap_requested_coverage_amount,
    ap.underwriter_assigned <span class="k">AS</span> ap_underwriter_assigned
<span class="k">FROM</span>
    application_processing_data apd
<span class="k">LEFT JOIN</span>
    application_processings ap
<span class="k">ON</span>
    apd.application_id <span class="o">=</span> ap.application_id
<span class="k">LIMIT</span> <span class="n">20</span>;</pre>
  </div>
  <p style="top:342.4px;left:6.5px;font-size:10.22px">This query does the following:</p>
  <p style="top:392.8px;left:14px">1. It selects all columns from <code>application_processing_data</code> using <code>apd.*</code></p>
  <p style="top:421.8px;left:14px">2. It then selects all columns from <code>application_processings</code>, giving them aliases to<br><span style="padding-left:11.5px">avoid column name conflicts</span></p>
  <p style="top:465.9px;left:14px">3. It uses a LEFT JOIN to ensure all records from <code>application_processing_data</code> are<br><span style="padding-left:11.5px">included</span></p>
 </div>
 <div class="btn" style="left:179px;width:50px;border:1px solid #1a73c8;background:#fff;color:#1a73c8"><span class="abs" style="left:12px">+&nbsp; Add</span></div>
 <div class="btn" style="left:233.2px;width:49px;background:#0573cd;color:#fff;font-weight:bold"><svg class="abs" style="left:12px;top:5.2px" width="7" height="8" viewBox="0 0 7 8"><path d="M0.8 0.9L6 4L0.8 7.1Z" fill="none" stroke="#fff" stroke-width="1" stroke-linejoin="round"/></svg><span class="abs" style="left:22.5px;top:.6px">Run</span></div>
 <div id="inp" class="abs"><span>Ask a question about your data.</span><svg class="abs" style="left:428.5px;top:27px" width="14" height="12" viewBox="0 0 14 12"><path d="M1.2 1L12.8 5.6L1.2 10.8L2.6 6.6L8 5.7L2.6 5Z" fill="none" stroke="#1a73c8" stroke-width="1.2" stroke-linejoin="round"/></svg></div>
</div>
</body>
</html>
